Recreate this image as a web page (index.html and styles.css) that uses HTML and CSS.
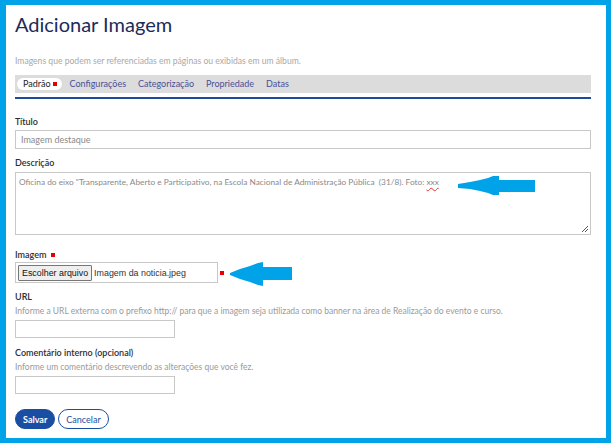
FILE: index.html
```html
<!DOCTYPE html>
<html lang="pt-BR">
<head>
<meta charset="utf-8">
<title>Adicionar Imagem</title>
<link rel="stylesheet" href="styles.css">
</head>
<body>
<div class="frame">
  <h1 class="title">Adicionar Imagem</h1>
  <p class="subtitle">Imagens que podem ser referenciadas em páginas ou exibidas em um álbum.</p>
  <nav class="tabs">
    <span class="tab active">Padrão <i class="req"></i></span>
    <span class="tab">Configurações</span>
    <span class="tab">Categorização</span>
    <span class="tab">Propriedade</span>
    <span class="tab">Datas</span>
  </nav>
  <div class="rule"></div>

  <div class="field f-titulo">
    <label class="label">Título</label>
    <div class="input full">Imagem destaque</div>
  </div>

  <div class="field f-desc">
    <label class="label">Descrição</label>
    <div class="textarea">
      <span>Oficina do eixo "Transparente, Aberto e Participativo, na Escola Nacional de Administração Pública&nbsp; (31/8). Foto: <span class="spell">xxx</span></span>
      <svg class="grip" width="8" height="8" viewBox="0 0 8 8"><path d="M1 7L7 1M4 7L7 4" stroke="#555" stroke-width="1"/></svg>
      <svg class="arrow arrow1" width="78" height="20" viewBox="0 0 78 20"><path d="M0 8 L12 6 L22 4 L30 2 L35 0 L41 0 L41 4 L77 4 L77 16 L41 16 L41 19 L35 19 L30 17 L22 15 L12 13 L0 12 Z" fill="#00a2e8"/></svg>
    </div>
  </div>

  <div class="field f-img">
    <label class="label">Imagem <i class="req"></i></label>
    <div class="file-row">
      <div class="file">
        <span class="file-btn">Escolher arquivo</span>
        <span class="file-name">Imagem da noticia.jpeg</span>
      </div>
      <i class="req req-side"></i>
      <svg class="arrow arrow2" width="63" height="25" viewBox="0 0 63 25"><path d="M0 11 L10 7 L20 4 L28 1 L33 0 L33 5 L62 5 L62 18 L33 18 L33 24 L28 23 L20 20 L10 17 L0 13 Z" fill="#00a2e8"/></svg>
    </div>
  </div>

  <div class="field f-url">
    <label class="label">URL</label>
    <p class="help">Informe a URL externa com o prefixo http:// para que a imagem seja utilizada como banner na área de Realização do evento e curso.</p>
    <div class="input short"></div>
  </div>

  <div class="field f-com">
    <label class="label">Comentário interno (opcional)</label>
    <p class="help">Informe um comentário descrevendo as alterações que você fez.</p>
    <div class="input short"></div>
  </div>

  <div class="actions">
    <button class="btn primary">Salvar</button>
    <button class="btn outline">Cancelar</button>
  </div>
</div>
</body>
</html>
```

FILE: styles.css
```css
* { box-sizing: border-box; }
html, body { margin: 0; padding: 0; background: #fff; }
body { font-family: Lato, "Open Sans", sans-serif; }

.frame {
  width: 611px;
  height: 443px;
  border-style: solid;
  border-color: #00a2e8;
  border-width: 5px 5px 5px 6px;
  padding: 0 15px 0 9px;
  overflow: hidden;
}

.title {
  margin: 7px 0 0 0;
  font-size: 20px;
  line-height: 24px;
  font-weight: 400;
  color: #1c2b5a;
}

.subtitle {
  margin: 19px 0 0 0;
  font-size: 8.6px;
  line-height: 12px;
  color: #a9a9a9;
}

.tabs {
  margin-top: 8px;
  height: 18px;
  background: #dcdcdc;
  display: flex;
  align-items: center;
  padding-left: 2px;
  gap: 12px;
}
.tab {
  font-size: 9px;
  color: #4b4f96;
  line-height: 12px;
}
.tab.active {
  background: #fff;
  color: #1e1e1e;
  border-radius: 7px;
  padding: 0 5px 0 6px;
  margin-right: -4px;
  display: flex;
  align-items: center;
  gap: 2px;
}

.req {
  display: inline-block;
  width: 4px;
  height: 4px;
  background: #e60000;
  vertical-align: middle;
}

.rule {
  margin-top: 4px;
  height: 2px;
  background: #1d4a9e;
}

.field { display: flex; flex-direction: column; }
.label {
  font-size: 9px;
  line-height: 12px;
  color: #2e2e2e;
  font-weight: 600;
  display: flex;
  align-items: center;
  gap: 5px;
}

.f-titulo { margin-top: 17px; }
.f-titulo .input { margin-top: 2px; }
.f-desc { margin-top: 8px; }
.f-desc .textarea { margin-top: 3px; }
.f-img { margin-top: 14px; }
.f-img .file-row { margin-top: 1px; }
.f-url { margin-top: 8px; }
.f-com { margin-top: 9px; }

.input {
  border: 1px solid #c8c8c8;
  height: 19px;
  font-size: 9px;
  color: #8a8a8a;
  padding: 0 5px;
  display: flex;
  align-items: center;
}
.input.full { width: 576px; }
.input.short { width: 160px; height: 18px; margin-top: 3px; }

.textarea {
  position: relative;
  width: 576px;
  height: 63px;
  border: 1px solid #c8c8c8;
  font-size: 8.3px;
  color: #8a8a8a;
  padding: 3px 3px;
  line-height: 12px;
}
.spell {
  text-decoration: underline wavy #e03030;
  text-decoration-thickness: 1px;
  text-underline-offset: 2px;
}
.grip { position: absolute; right: 1px; bottom: 1px; }

.arrow { position: absolute; }
.arrow1 { left: 442px; top: 3px; }

.file-row { position: relative; display: flex; align-items: center; }
.file {
  width: 203px;
  height: 21px;
  border: 1px solid #c8c8c8;
  display: flex;
  align-items: center;
  padding-left: 2px;
  gap: 2px;
}
.file-btn {
  font-family: Arial, "Liberation Sans", sans-serif;
  font-size: 8.9px;
  color: #111;
  background: #efefef;
  border: 1px solid #767676;
  border-radius: 1px;
  height: 16px;
  line-height: 14px;
  padding: 0 3px;
}
.file-name {
  font-family: Arial, "Liberation Sans", sans-serif;
  font-size: 8.9px;
  color: #333;
}
.req-side { margin-left: 2px; }
.arrow2 { left: 215px; top: 0; }

.help {
  margin: 2px 0 0 0;
  font-size: 8.5px;
  line-height: 12px;
  color: #9a9a9a;
}

.actions {
  margin-top: 15px;
  display: flex;
  gap: 3px;
}
.btn {
  font-family: Lato, "Open Sans", sans-serif;
  font-size: 9px;
  height: 20px;
  border-radius: 10px;
  padding: 0 7px;
  cursor: pointer;
}
.btn.primary {
  background: #1a4ea3;
  color: #fff;
  border: 1px solid #1a4ea3;
  font-weight: 700;
  width: 40px;
}
.btn.outline {
  background: #fff;
  color: #1a4ea3;
  border: 1px solid #1a4ea3;
  width: 51px;
}
```
